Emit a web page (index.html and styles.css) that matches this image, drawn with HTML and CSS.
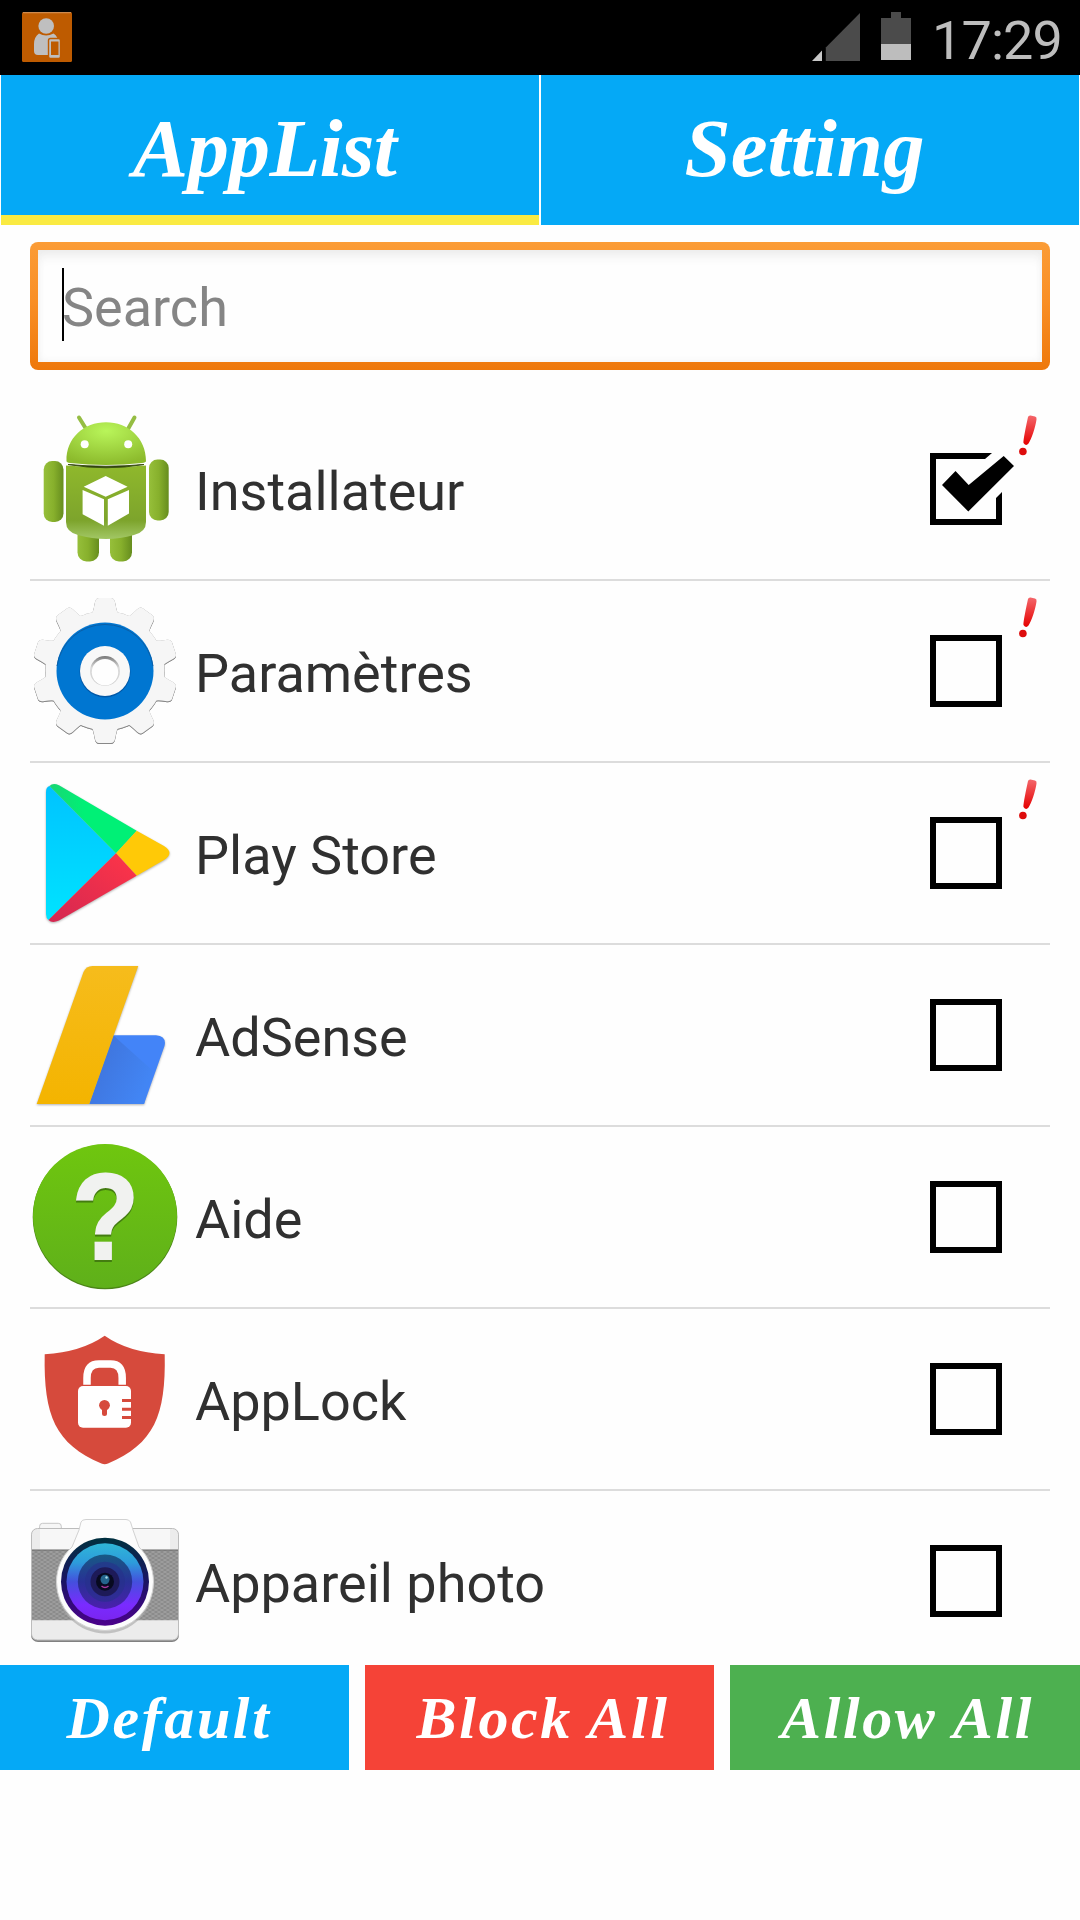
FILE: index.html
```html
<!DOCTYPE html>
<html lang="fr">
<head>
<meta charset="utf-8">
<title>AppList</title>
<link rel="stylesheet" href="styles.css">
</head>
<body>
<header class="status">
  <svg class="status-app" viewBox="0 0 50 50">
    <rect width="50" height="50" rx="1.5" fill="#be5b00"/>
    <path d="M1 .7H49" stroke="#cf8a4c" stroke-width="1.2"/>
    <circle cx="24.2" cy="14" r="7.8" fill="#bfbfbf"/>
    <path d="M17 21.500q7 4 14.500 0q5 3 5 11V43H16q-4 0-4-4V32q0-7 5-10.500z" fill="#bfbfbf"/>
    <rect x="26.500" y="26.500" width="12" height="20" rx="2" fill="#bfbfbf" stroke="#be5b00" stroke-width="1.400"/>
    <rect x="29" y="29.500" width="7.500" height="13.500" fill="#be5b00"/>
  </svg>
  <div class="status-right">
    <svg class="signal" viewBox="0 0 48 48">
      <path d="M0 48L10 37.500V48z" fill="#c8c8c8"/>
      <path d="M13.800 34.500L48 0V48H13.800z" fill="#4b4b4b"/>
    </svg>
    <svg class="battery" viewBox="0 0 30 48">
      <path d="M10 0H20V6H30V32H0V6H10z" fill="#4b4b4b"/>
      <path d="M0 32H30V48H0z" fill="#bdbdbd"/>
    </svg>
    <span class="clock">17:29</span>
  </div>
</header>

<nav class="tabs">
  <div class="tab tab-active">AppList</div>
  <div class="tab">Setting</div>
</nav>

<div class="search-area">
  <div class="search"><div class="search-inner"><span class="caret"></span><span class="hint">Search</span></div></div>
</div>

<svg class="defs" width="0" height="0">
  <defs>
    <linearGradient id="bang-fill" x1="0" y1="0" x2="0" y2="1">
      <stop offset="0" stop-color="#f4676b"/><stop offset="1" stop-color="#e60000"/>
    </linearGradient>
    <symbol id="bang" viewBox="0 0 18 41">
      <path d="M9 2Q9.500 .3 11.500 .5L16 1.500Q18 2 17.500 4.500C16.500 12 12.500 24 9.500 28.500Q7 31.500 4.500 28Q3.800 26 9 2z" fill="url(#bang-fill)"/>
      <circle cx="3.900" cy="36.500" r="3.800" fill="#dd0c0c"/>
    </symbol>
    <symbol id="box" viewBox="0 0 86 72">
      <rect x="3" y="3" width="66" height="66" fill="none" stroke="#000" stroke-width="6"/>
    </symbol>
    <symbol id="box-on" viewBox="0 0 86 72">
      <path d="M0 0H62L55 6H6V66H66V45L72 39V72H0z"/>
      <path d="M12 32L25.500 18L38.700 32L73.700 3L84 13L38.300 58.500z"/>
    </symbol>
  </defs>
</svg>

<main class="list">
  <div class="row">
    <svg class="icon" viewBox="0 0 150 150">
      <defs>
        <linearGradient id="a1" x1="0" y1="0" x2="0" y2="1"><stop offset="0" stop-color="#8fb82c"/><stop offset=".75" stop-color="#7da42c"/><stop offset="1" stop-color="#a2c765"/></linearGradient>
        <radialGradient id="a2" cx=".5" cy=".2" r=".8"><stop offset="0" stop-color="#b9f55a"/><stop offset="1" stop-color="#8cba2c"/></radialGradient>
        <linearGradient id="a3" x1="0" y1="0" x2="1" y2="0"><stop offset="0" stop-color="#96bf3a"/><stop offset=".5" stop-color="#87b02c"/><stop offset="1" stop-color="#668d1e"/></linearGradient>
      </defs>
      <path d="M49 3.500L55.500 14M104.500 3.500L98 15" stroke="#95bd43" stroke-width="4" stroke-linecap="round"/>
      <rect x="47.500" y="110" width="21.500" height="37.500" rx="9" fill="url(#a3)"/>
      <rect x="80" y="110" width="22" height="37.500" rx="9" fill="url(#a3)"/>
      <rect x="13.700" y="47" width="19.800" height="61" rx="8.500" fill="url(#a3)"/>
      <rect x="119" y="45.500" width="19.700" height="61" rx="8.500" fill="url(#a3)"/>
      <path d="M36 51.500Q76 55 116 51.500V108Q116 118 104 121Q76 129 48 121Q36 118 36 108z" fill="url(#a1)"/>
      <path d="M38 50.500Q76 54 114 50.500Q76 57 38 50.500z" fill="#1d2b06" stroke="#3d5413" stroke-width="1"/>
      <path d="M36.500 47C36 24 54 8.300 76 8.300S116 24 116 47Q116 48.500 112 49Q76 53 40 49Q36.500 48.500 36.500 47z" fill="url(#a2)"/>
      <circle cx="54.700" cy="30.300" r="4" fill="#fff"/><circle cx="98.200" cy="30.300" r="4" fill="#fff"/>
      <path d="M75.700 62L97.600 72.700L75.700 82.700L53.700 72.700zM52.600 76L74 85.300V111.700L52.600 100.300zM77.800 85.300L99 76V99.500L77.800 111.700z" fill="#fff"/>
    </svg>
    <span class="label">Installateur</span>
    <svg class="bang"><use href="#bang"/></svg>
    <svg class="check"><use href="#box-on"/></svg>
  </div>
  <div class="row">
    <svg class="icon" viewBox="0 0 150 150">
      <defs>
        <path id="tooth" d="M75 75L60.500 18.800Q63 17 64 11L65 6Q66 2 69 2H81Q84 2 85 6L86 11Q87 17 89.500 18.800z"/>
        <linearGradient id="g1" x1="0" y1="0" x2="0" y2="1"><stop offset="0" stop-color="#777"/><stop offset=".4" stop-color="#ddd"/><stop offset="1" stop-color="#ccc"/></linearGradient>
      </defs>
      <g class="gear" fill="#f6f6f6">
        <circle cx="75" cy="74.500" r="59.500"/>
        <use href="#tooth"/>
        <use href="#tooth" transform="rotate(36 75 74.500)"/>
        <use href="#tooth" transform="rotate(72 75 74.500)"/>
        <use href="#tooth" transform="rotate(108 75 74.500)"/>
        <use href="#tooth" transform="rotate(144 75 74.500)"/>
        <use href="#tooth" transform="rotate(180 75 74.500)"/>
        <use href="#tooth" transform="rotate(216 75 74.500)"/>
        <use href="#tooth" transform="rotate(252 75 74.500)"/>
        <use href="#tooth" transform="rotate(288 75 74.500)"/>
        <use href="#tooth" transform="rotate(324 75 74.500)"/>
      </g>
      <circle cx="75" cy="75" r="48.500" fill="#0076d1"/>
      <path d="M27 70A48.500 48.500 0 0 1 123 70" fill="none" stroke="#0b5ea6" stroke-width="1"/>
      <circle cx="75" cy="76" r="25.500" fill="#0058a8"/>
      <circle cx="75" cy="75" r="25" fill="#f8f8f8"/>
      <circle cx="75" cy="75" r="15" fill="url(#g1)"/>
      <circle cx="75" cy="76.200" r="13.200" fill="#fefefe"/>
    </svg>
    <span class="label">Paramètres</span>
    <svg class="bang"><use href="#bang"/></svg>
    <svg class="check"><use href="#box"/></svg>
  </div>
  <div class="row">
    <svg class="icon" viewBox="0 0 150 150">
      <defs>
        <linearGradient id="p1" x1="0" y1="0" x2="0" y2="1"><stop offset="0" stop-color="#00c3ff"/><stop offset="1" stop-color="#00e3ff"/></linearGradient>
        <linearGradient id="p2" x1="0" y1="0" x2="1" y2="0"><stop offset="0" stop-color="#19d673"/><stop offset=".4" stop-color="#00f076"/></linearGradient>
        <linearGradient id="p3" x1="1" y1="0" x2="0" y2="1"><stop offset="0" stop-color="#ff3548"/><stop offset="1" stop-color="#d42751"/></linearGradient>
      </defs>
      <g class="soft">
        <path d="M86 75.300L19.500 8Q16 9 16 14V136Q16 140 18.500 142z" fill="url(#p1)"/>
        <path d="M19.500 8Q23 4.500 29 7.300L106.700 52.700L86 75.300z" fill="url(#p2)"/>
        <path d="M106.700 52.700L134 68Q145 75 134 82L106.700 97.700L86 75.300z" fill="#ffc907"/>
        <path d="M86 75.300L106.700 97.700L29 142.500Q22 145.500 18.500 142z" fill="url(#p3)"/>
      </g>
    </svg>
    <span class="label">Play Store</span>
    <svg class="bang"><use href="#bang"/></svg>
    <svg class="check"><use href="#box"/></svg>
  </div>
  <div class="row">
    <svg class="icon" viewBox="0 0 150 150">
      <defs>
        <linearGradient id="s1" x1="0" y1="0" x2="0" y2="1"><stop offset="0" stop-color="#f6bc1c"/><stop offset="1" stop-color="#f4b400"/></linearGradient>
        <linearGradient id="s2" x1="0" y1="0" x2="1" y2=".5"><stop offset="0" stop-color="#3e70d6"/><stop offset="1" stop-color="#4285f4"/></linearGradient>
      </defs>
      <g class="soft">
        <path d="M83.300 75.300H126Q137 76.500 134.500 86L114 144H59.300z" fill="#4384f8"/>
        <path d="M83.300 75.300L122.700 110.700L114 144H59.300z" fill="url(#s2)"/>
        <path d="M6.700 144L53.500 12Q56 6 62.500 6H108.300L59.300 144z" fill="url(#s1)"/>
      </g>
    </svg>
    <span class="label">AdSense</span>
    <svg class="check"><use href="#box"/></svg>
  </div>
  <div class="row">
    <svg class="icon" viewBox="0 0 150 150">
      <defs><linearGradient id="h1" x1="0" y1="0" x2="0" y2="1"><stop offset="0" stop-color="#6fc60f"/><stop offset="1" stop-color="#5fb01a"/></linearGradient></defs>
      <circle cx="75" cy="75" r="72.300" fill="#4b8517"/>
      <circle cx="75" cy="74" r="72" fill="url(#h1)"/>
      <text class="help-mark" transform="translate(75.500 117) scale(.9 1)" text-anchor="middle">?</text>
    </svg>
    <span class="label">Aide</span>
    <svg class="check"><use href="#box"/></svg>
  </div>
  <div class="row">
    <svg class="icon" viewBox="0 0 150 150">
      <path d="M74.700 11.700Q98 28 134.700 30.300C136 92 124 120 78 139.500Q74.700 140.800 71.400 139.500C25.500 120 13.500 92 14.700 30.300Q51 28 74.700 11.700z" fill="#d64a3c"/>
      <path d="M57 60.700V54Q57 40 69 40H80.500Q92.200 40 92.200 54V60.700" fill="none" stroke="#fff" stroke-width="7.500"/>
      <rect x="48" y="62" width="53" height="41.700" rx="5" fill="#fff"/>
      <circle cx="74.500" cy="81.300" r="5.400" fill="#d64a3c"/>
      <path d="M74.500 82V89.500" stroke="#d64a3c" stroke-width="5" stroke-linecap="round"/>
      <path d="M92 76.600H101.500M92 85.200H101.500M92 93.500H101.500" stroke="#d64a3c" stroke-width="3"/>
    </svg>
    <span class="label">AppLock</span>
    <svg class="check"><use href="#box"/></svg>
  </div>
  <div class="row">
    <svg class="icon" viewBox="0 0 150 150">
      <defs>
        <pattern id="mesh" width="6" height="4" patternUnits="userSpaceOnUse"><rect width="6" height="4" fill="#8b8b8b"/><path d="M0 0L3 2L6 0M0 4L3 2L6 4" stroke="#a3a3a3" stroke-width=".8" fill="none"/></pattern>
        <linearGradient id="c1" x1="0" y1="0" x2="0" y2="1"><stop offset="0" stop-color="#2fb6d8"/><stop offset=".25" stop-color="#2d9cdb"/><stop offset=".5" stop-color="#4450dd"/><stop offset=".8" stop-color="#7a2bff"/><stop offset="1" stop-color="#7a25f0"/></linearGradient>
        <linearGradient id="c2" x1="0" y1="0" x2="0" y2="1"><stop offset="0" stop-color="#00303f"/><stop offset=".5" stop-color="#1b1464"/><stop offset="1" stop-color="#4b008c"/></linearGradient>
        <linearGradient id="c3" x1="0" y1="0" x2="0" y2="1"><stop offset="0" stop-color="#175a85"/><stop offset=".5" stop-color="#283195"/><stop offset="1" stop-color="#4c1fae"/></linearGradient>
      </defs>
      <rect x="1" y="24" width="148" height="112" rx="7" fill="#808080"/>
      <rect x="9.600" y="17.300" width="21.700" height="12" rx="3" fill="#f6f6f6" stroke="#c6c6c6"/>
      <rect x="1.500" y="22.500" width="147" height="111.500" rx="6" fill="#ececec" stroke="#bcbcbc"/>
      <path d="M10 23H140V44H10z" fill="#f7f7f7"/>
      <path d="M2 44H148V114.300H2z" fill="url(#mesh)"/>
      <path d="M2 44H148" stroke="#686868"/>
      <circle cx="75" cy="79" r="48.500" fill="#aaa" fill-opacity=".65"/>
      <path d="M49 24L51 16Q52 13.500 56 13.500H96Q99 13.500 100.500 16L103 24L109 41C118 50 123.500 62 123.500 76A48.500 48.500 0 0 1 26.500 76C26.500 62 32 50 42 41z" fill="#fcfcfc" stroke="#d2d2d2"/>
      <circle cx="75" cy="75.700" r="44" fill="url(#c2)"/>
      <circle cx="75" cy="75.700" r="38.500" fill="url(#c1)"/>
      <circle cx="75" cy="75.700" r="27.200" fill="url(#c3)"/>
      <circle cx="75" cy="75.700" r="20" fill="#26308a" fill-opacity=".6"/>
      <circle cx="75" cy="75.700" r="14.500" fill="#1d1a58"/>
      <circle cx="75" cy="75.700" r="9" fill="#070a20"/>
      <ellipse cx="75" cy="73.500" rx="4.500" ry="4.800" fill="#23648c"/>
      <path d="M71.500 80Q75 83 78.500 80" stroke="#a83a9c" stroke-width="1.500" fill="none"/>
      <circle cx="76.500" cy="71.500" r="1.200" fill="#a5d8e8"/>
    </svg>
    <span class="label">Appareil photo</span>
    <svg class="check"><use href="#box"/></svg>
  </div>
</main>

<footer class="actions">
  <div class="btn btn-default">Default</div>
  <div class="btn btn-block">Block All</div>
  <div class="btn btn-allow">Allow All</div>
</footer>
</body>
</html>
```
FILE: styles.css
```css
* { box-sizing: border-box; }

body {
  margin: 0;
  width: 1080px;
  height: 1920px;
  display: flex;
  flex-direction: column;
  background: #fefefe;
  font-family: Roboto, "Liberation Sans", sans-serif;
  overflow: hidden;
}

.defs { position: absolute; }

.status {
  height: 75px;
  flex: none;
  background: #000;
  display: flex;
  justify-content: space-between;
  align-items: flex-start;
  padding: 12px 18px 0 22px;
}
.status-app { width: 50px; height: 50px; }
.status-right { display: flex; align-items: flex-start; }
.signal { width: 48px; height: 48px; margin: 1px 21px 0 0; }
.battery { width: 30px; height: 48px; margin-right: 21px; }
.clock {
  width: 130px;
  font-size: 54px;
  line-height: 58px;
  letter-spacing: -.9px;
  color: #bdbdbd;
  white-space: nowrap;
}

.tabs {
  height: 150px;
  flex: none;
  display: grid;
  grid-template-columns: repeat(2, minmax(0, 1fr));
  grid-template-rows: 150px;
  gap: 2px;
  padding: 0 1px;
}
.tab {
  background: #05a9f6;
  color: #fff;
  font: italic bold 83px/147px "Liberation Serif", serif;
  text-align: center;
  padding-right: 11px;
}
.tab-active {
  border-bottom: 10px solid #faea42;
  letter-spacing: -.6px;
}

.search-area { flex: none; height: 174px; padding: 17px 30px 0; }
.search {
  height: 128px;
  padding: 8px;
  border-radius: 8px;
  background: linear-gradient(#fb9c36, #f98f26 45%, #ee780b);
}
.search-inner {
  height: 112px;
  display: flex;
  align-items: flex-start;
  padding: 18px 24px 0;
  background: #fefefe;
  box-shadow: inset 0 10px 14px -6px #e9e9e9, inset 0 0 8px #f2f2f2;
}
.caret { width: 2px; height: 73px; background: #000; }
.hint { font-size: 54px; line-height: 79px; color: #858585; margin-left: -2px; }

.list { flex: none; height: 1266px; margin: 0 30px; overflow: hidden; }
.row {
  height: 182px;
  display: flex;
  align-items: flex-start;
  border-bottom: 2px solid #dcdcdc;
  position: relative;
}
.icon { width: 150px; height: 150px; margin-top: 15px; flex: none; }
.label {
  flex: 1;
  margin: 55px 0 0 15px;
  font-size: 54px;
  line-height: 76px;
  color: #303030;
  white-space: nowrap;
}
.check { width: 86px; height: 72px; margin: 54px 34px 0 0; flex: none; }
/* warning mark laid over the row's top right corner */
.bang { position: absolute; width: 18px; height: 41px; right: 13px; top: 16px; }

.gear { filter: drop-shadow(0 0 .7px #999) drop-shadow(0 1px .7px #888); }
.soft { filter: drop-shadow(0 1.500px 1px rgba(0, 0, 0, .3)); }
.help-mark {
  font: bold 122px "Liberation Sans", sans-serif;
  fill: #f1f2f0;
  stroke: #f1f2f0;
  stroke-width: 2px;
  filter: drop-shadow(0 2.500px 0 #437c10);
}

.actions {
  flex: none;
  height: 105px;
  display: grid;
  grid-template-columns: 349px 349px 350px;
  grid-template-rows: 105px;
  gap: 16px;
}
.btn {
  color: #fff;
  font: italic bold 60px/107px "Liberation Serif", serif;
  letter-spacing: 2.600px;
  text-align: center;
  white-space: nowrap;
}
.btn-default { background: #05a9f6; padding-right: 11px; }
.btn-block { background: #f54337; padding-left: 7px; }
.btn-allow { background: #4db050; padding-left: 5px; }
```
